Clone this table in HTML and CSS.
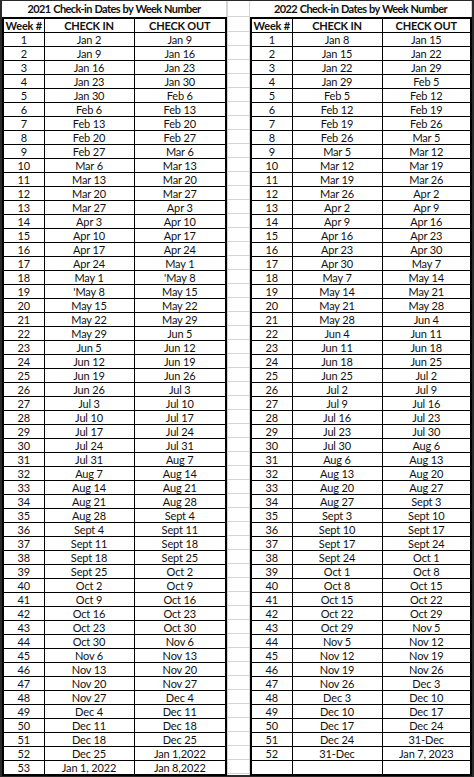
FILE: index.html
```html
<!DOCTYPE html>
<html>
<head>
<meta charset="utf-8">
<link rel="stylesheet" href="styles.css">
</head>
<body>
<div class="sheet">
  <section class="block">
    <div class="title">2021 Check-in Dates by Week Number</div>
    <table class="dates">
      <colgroup><col class="c-wk"><col class="c-in"><col></colgroup>
      <thead><tr><th>Week #</th><th>CHECK IN</th><th>CHECK OUT</th></tr></thead>
      <tbody id="t2021"></tbody>
    </table>
  </section>
  <div class="gap"></div>
  <section class="block right">
    <div class="title">2022 Check-in Dates by Week Number</div>
    <table class="dates">
      <colgroup><col class="c-wk"><col class="c-in"><col></colgroup>
      <thead><tr><th>Week #</th><th>CHECK IN</th><th>CHECK OUT</th></tr></thead>
      <tbody id="t2022"></tbody>
    </table>
  </section>
</div>
<script src="script.js"></script>
</body>
</html>
```
FILE: script.js
```js
const d2021 = [
["Jan 2","Jan 9"],["Jan 9","Jan 16"],["Jan 16","Jan 23"],["Jan 23","Jan 30"],["Jan 30","Feb 6"],
["Feb 6","Feb 13"],["Feb 13","Feb 20"],["Feb 20","Feb 27"],["Feb 27","Mar 6"],["Mar 6","Mar 13"],
["Mar 13","Mar 20"],["Mar 20","Mar 27"],["Mar 27","Apr 3"],["Apr 3","Apr 10"],["Apr 10","Apr 17"],
["Apr 17","Apr 24"],["Apr 24","May 1"],["May 1","'May 8"],["'May 8","May 15"],["May 15","May 22"],
["May 22","May 29"],["May 29","Jun 5"],["Jun 5","Jun 12"],["Jun 12","Jun 19"],["Jun 19","Jun 26"],
["Jun 26","Jul 3"],["Jul 3","Jul 10"],["Jul 10","Jul 17"],["Jul 17","Jul 24"],["Jul 24","Jul 31"],
["Jul 31","Aug 7"],["Aug 7","Aug 14"],["Aug 14","Aug 21"],["Aug 21","Aug 28"],["Aug 28","Sept 4"],
["Sept 4","Sept 11"],["Sept 11","Sept 18"],["Sept 18","Sept 25"],["Sept 25","Oct 2"],["Oct 2","Oct 9"],
["Oct 9","Oct 16"],["Oct 16","Oct 23"],["Oct 23","Oct 30"],["Oct 30","Nov 6"],["Nov 6","Nov 13"],
["Nov 13","Nov 20"],["Nov 20","Nov 27"],["Nov 27","Dec 4"],["Dec 4","Dec 11"],["Dec 11","Dec 18"],
["Dec 18","Dec 25"],["Dec 25","Jan 1,2022"],["Jan 1, 2022","Jan 8,2022"]
];
const d2022 = [
["Jan 8","Jan 15"],["Jan 15","Jan 22"],["Jan 22","Jan 29"],["Jan 29","Feb 5"],["Feb 5","Feb 12"],
["Feb 12","Feb 19"],["Feb 19","Feb 26"],["Feb 26","Mar 5"],["Mar 5","Mar 12"],["Mar 12","Mar 19"],
["Mar 19","Mar 26"],["Mar 26","Apr 2"],["Apr 2","Apr 9"],["Apr 9","Apr 16"],["Apr 16","Apr 23"],
["Apr 23","Apr 30"],["Apr 30","May 7"],["May 7","May 14"],["May 14","May 21"],["May 21","May 28"],
["May 28","Jun 4"],["Jun 4","Jun 11"],["Jun 11","Jun 18"],["Jun 18","Jun 25"],["Jun 25","Jul 2"],
["Jul 2","Jul 9"],["Jul 9","Jul 16"],["Jul 16","Jul 23"],["Jul 23","Jul 30"],["Jul 30","Aug 6"],
["Aug 6","Aug 13"],["Aug 13","Aug 20"],["Aug 20","Aug 27"],["Aug 27","Sept 3"],["Sept 3","Sept 10"],
["Sept 10","Sept 17"],["Sept 17","Sept 24"],["Sept 24","Oct 1"],["Oct 1","Oct 8"],["Oct 8","Oct 15"],
["Oct 15","Oct 22"],["Oct 22","Oct 29"],["Oct 29","Nov 5"],["Nov 5","Nov 12"],["Nov 12","Nov 19"],
["Nov 19","Nov 26"],["Nov 26","Dec 3"],["Dec 3","Dec 10"],["Dec 10","Dec 17"],["Dec 17","Dec 24"],
["Dec 24","31-Dec"],["31-Dec","Jan 7, 2023"]
];
function fill(id, data, total) {
  const tb = document.getElementById(id);
  let html = "";
  for (let i = 0; i < total; i++) {
    const r = data[i];
    html += r
      ? `<tr><td>${i + 1}</td><td>${r[0]}</td><td>${r[1]}</td></tr>`
      : `<tr><td></td><td></td><td></td></tr>`;
  }
  tb.innerHTML = html;
}
fill("t2021", d2021, 53);
fill("t2022", d2022, 53);
```
FILE: styles.css
```css
html, body {
  margin: 0;
  padding: 0;
  background: #fff;
}
body {
  width: 474px;
  height: 777px;
  overflow: hidden;
  font-family: Lato, "Open Sans", sans-serif;
  font-size: 11px;
  color: #111;
}
.sheet {
  display: flex;
  height: 777px;
  box-sizing: border-box;
  border-left: 2px solid #2a2a2a;
  border-right: 2px solid #2a2a2a;
  border-top: 1px solid #2a2a2a;
  border-bottom: 2px solid #2a2a2a;
}
.block {
  width: 225px;
  display: flex;
  flex-direction: column;
}
.block.right {
  width: 222px;
}
.title {
  height: 16px;
  line-height: 16px;
  text-align: center;
  font-weight: 700;
  font-size: 11px;
  letter-spacing: -0.6px;
  word-spacing: 0.5px;
  box-sizing: border-box;
  border-right: 1px solid #d4d4d4;
}
.dates {
  border-collapse: collapse;
  width: 100%;
  table-layout: fixed;
  border: 2px solid #000;
}
.dates col.c-wk {
  width: 41px;
}
.dates col.c-in {
  width: 90px;
}
.dates th, .dates td {
  border: 1px solid #000;
  height: 13px;
  padding: 0;
  line-height: 13px;
  text-align: center;
  white-space: nowrap;
  overflow: hidden;
}
.dates th {
  font-weight: 700;
  letter-spacing: -0.2px;
}
.dates td {
  letter-spacing: -0.15px;
}
.gap {
  width: 23px;
  box-sizing: border-box;
  border-left: 1px solid #d4d4d4;
  border-right: 1px solid #d4d4d4;
  background: linear-gradient(#d4d4d4, #d4d4d4) 0 15px / 100% 1px no-repeat,
              repeating-linear-gradient(to bottom, transparent 0, transparent 13px, #d4d4d4 13px, #d4d4d4 14px) 0 17px / 100% calc(100% - 17px) no-repeat;
}
```
